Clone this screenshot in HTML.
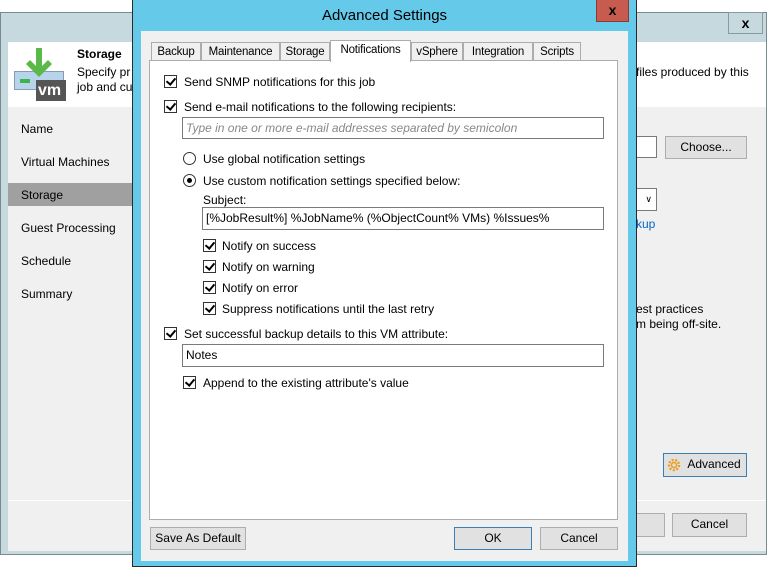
<!DOCTYPE html>
<html><head><style>
*{box-sizing:border-box;margin:0;padding:0}
body{width:768px;height:568px;background:#fff;position:relative;overflow:hidden;font-family:"Liberation Sans",sans-serif;font-size:12px;color:#000}
.a{position:absolute}
.t{position:absolute;white-space:nowrap;line-height:14px}
.btn{position:absolute;background:#e1e1e1;border:1px solid #adadad;text-align:center;line-height:21px}
.inp{position:absolute;background:#fff;border:1px solid #7a7a7a;padding-left:3px;line-height:20px;white-space:nowrap;overflow:hidden}
.cb{position:absolute;width:13px;height:13px;border:1px solid #333;background:#fff}
.cb:after{content:"";position:absolute;left:3px;top:0px;width:4px;height:7px;border:solid #000;border-width:0 2px 2px 0;transform:rotate(40deg)}
.rb{position:absolute;width:13px;height:13px;border:1px solid #333;border-radius:50%;background:#fff}
.rb.on:after{content:"";position:absolute;left:3px;top:3px;width:5px;height:5px;border-radius:50%;background:#000}
.tab{position:absolute;top:42px;height:19px;background:#f0f0f0;border:1px solid #acacac;border-bottom:none;text-align:center;line-height:18px;font-size:11.5px;letter-spacing:-0.2px}
</style></head><body>
<div class="a" style="left:0;top:12px;width:767px;height:543px;background:#c5d9df;border:1px solid #7a8a90"></div>
<div class="btn" style="left:728px;top:12px;width:35px;height:22px;background:#c5d9df;border-color:#8a9aa0;font-weight:bold;font-size:14px;line-height:20px">x</div>
<div class="a" style="left:8px;top:42px;width:758px;height:65px;background:#fff"></div>
<div class="a" style="left:8px;top:107px;width:758px;height:444px;background:#f0f0f0"></div>
<div class="a" style="left:8px;top:183px;width:124px;height:23px;background:#a0a0a0"></div>
<div class="a" style="left:8px;top:500px;width:758px;height:1px;background:#fff"></div>
<div class="a" style="left:14px;top:71px;width:50px;height:19px;background:#b8d4ec;border:1px solid #8a9ab0"></div>
<div class="a" style="left:20px;top:79px;width:10px;height:4px;background:#3bb54a"></div>
<div class="a" style="left:36px;top:80px;width:30px;height:21px;background:#555"></div>
<div class="t" style="left:38px;top:82px;color:#fff;font-weight:bold;font-size:16px;line-height:18px">vm</div>
<svg class="a" style="left:24px;top:48px" width="30" height="34"><path d="M12 0h6v18l6-6 4 4-13 13L2 16l4-4 6 6z" fill="#5ab947"/></svg>
<div class="t" style="left:77px;top:47px;font-weight:bold">Storage</div>
<div class="t" style="left:77px;top:65px">Specify pr</div>
<div class="t" style="left:77px;top:80px">job and cu</div>
<div class="t" style="left:636px;top:65px">files produced by this</div>
<div class="t" style="left:21px;top:122px">Name</div>
<div class="t" style="left:21px;top:155px">Virtual Machines</div>
<div class="t" style="left:21px;top:188px">Storage</div>
<div class="t" style="left:21px;top:221px">Guest Processing</div>
<div class="t" style="left:21px;top:254px">Schedule</div>
<div class="t" style="left:21px;top:287px">Summary</div>
<div class="inp" style="left:600px;top:136px;width:57px;height:22px"></div>
<div class="btn" style="left:665px;top:136px;width:82px;height:23px">Choose...</div>
<div class="inp" style="left:600px;top:188px;width:57px;height:23px"><span style="position:absolute;right:4px;top:0;font-size:9px">&#8744;</span></div>
<div class="t" style="left:636px;top:217px;color:#0066cc">kup</div>
<div class="t" style="left:636px;top:302px">est practices</div>
<div class="t" style="left:636px;top:317px">m being off-site.</div>
<div class="btn" style="left:663px;top:453px;width:84px;height:24px;border-color:#3c7fb1;padding-left:18px">Advanced</div>
<svg class="a" style="left:666px;top:457px" width="16" height="16"><circle cx="8" cy="8" r="5" fill="none" stroke="#e8a020" stroke-width="2.5" stroke-dasharray="2 1.5"/><circle cx="8" cy="8" r="2.5" fill="none" stroke="#e8a020" stroke-width="1.5"/></svg>
<div class="btn" style="left:600px;top:513px;width:65px;height:24px"></div>
<div class="btn" style="left:672px;top:513px;width:75px;height:24px">Cancel</div>
<div class="a" style="left:132px;top:0;width:505px;height:567px;background:#65c9ea;border:1px solid #2a2a2a;border-top:none"></div>
<div class="t" style="left:132px;top:7px;width:505px;text-align:center;font-size:15px;line-height:18px">Advanced Settings</div>
<div class="a" style="left:596px;top:0;width:33px;height:22px;background:#c75b50;border:1px solid #8a3a30;border-top:none;color:#000;font-weight:bold;font-size:14px;text-align:center;line-height:20px">x</div>
<div class="a" style="left:141px;top:31px;width:487px;height:530px;background:#f0f0f0"></div>
<div class="tab" style="left:151px;width:50px">Backup</div>
<div class="tab" style="left:201px;width:79px">Maintenance</div>
<div class="tab" style="left:280px;width:50px">Storage</div>
<div class="tab" style="left:411px;width:52px">vSphere</div>
<div class="tab" style="left:463px;width:70px">Integration</div>
<div class="tab" style="left:533px;width:48px">Scripts</div>
<div class="a" style="left:149px;top:60px;width:469px;height:460px;background:#fff;border:1px solid #acacac"></div>
<div class="tab" style="left:330px;top:40px;width:81px;height:22px;background:#fff;border-color:#acacac;line-height:19px">Notifications</div>
<div class="cb" style="left:164px;top:75px"></div><div class="t" style="left:184px;top:75px">Send SNMP notifications for this job</div>
<div class="cb" style="left:164px;top:100px"></div><div class="t" style="left:184px;top:100px">Send e-mail notifications to the following recipients:</div>
<div class="inp" style="left:182px;top:117px;width:422px;height:22px;color:#888;font-style:italic">Type in one or more e-mail addresses separated by semicolon</div>
<div class="rb" style="left:183px;top:152px"></div><div class="t" style="left:203px;top:152px">Use global notification settings</div>
<div class="rb on" style="left:183px;top:174px"></div><div class="t" style="left:203px;top:174px">Use custom notification settings specified below:</div>
<div class="t" style="left:203px;top:193px">Subject:</div>
<div class="inp" style="left:202px;top:207px;width:402px;height:23px">[%JobResult%] %JobName% (%ObjectCount% VMs) %Issues%</div>
<div class="cb" style="left:203px;top:239px"></div><div class="t" style="left:222px;top:239px">Notify on success</div>
<div class="cb" style="left:203px;top:260px"></div><div class="t" style="left:222px;top:260px">Notify on warning</div>
<div class="cb" style="left:203px;top:281px"></div><div class="t" style="left:222px;top:281px">Notify on error</div>
<div class="cb" style="left:203px;top:302px"></div><div class="t" style="left:222px;top:302px">Suppress notifications until the last retry</div>
<div class="cb" style="left:164px;top:327px"></div><div class="t" style="left:184px;top:327px">Set successful backup details to this VM attribute:</div>
<div class="inp" style="left:182px;top:344px;width:422px;height:23px">Notes</div>
<div class="cb" style="left:183px;top:376px"></div><div class="t" style="left:203px;top:376px">Append to the existing attribute's value</div>
<div class="btn" style="left:150px;top:527px;width:96px;height:23px">Save As Default</div>
<div class="btn" style="left:454px;top:527px;width:78px;height:23px;border-color:#3c7fb1">OK</div>
<div class="btn" style="left:540px;top:527px;width:78px;height:23px">Cancel</div>
</body></html>
